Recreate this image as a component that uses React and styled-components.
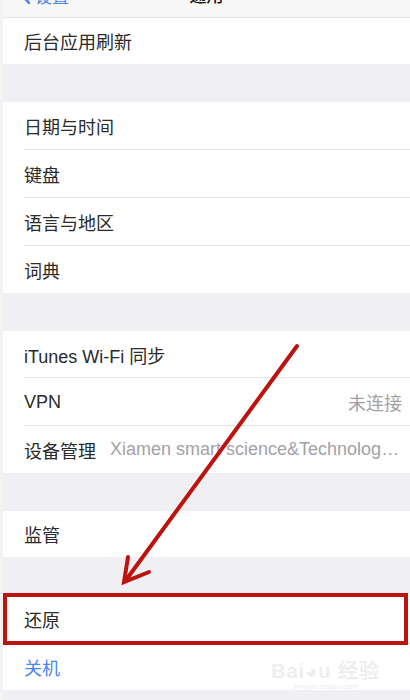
import React from "react";
import styled, { createGlobalStyle } from "styled-components";

const GlobalStyle = createGlobalStyle`
  html, body {
    margin: 0;
    padding: 0;
    background: #f3f3f1;
  }
  body {
    font-family: "Noto Sans", "Noto Sans CJK SC", sans-serif;
    -webkit-font-smoothing: antialiased;
  }
`;

const Page = styled.div`
  position: relative;
  width: 410px;
  height: 700px;
  overflow: hidden;
`;

const Screen = styled.div`
  margin-left: 3px;
  height: 700px;
  background: #efeff4;
`;

const NavBar = styled.div`
  height: 17px;
  background: #f7f7f7;
  border-bottom: 1px solid #e4e4e6;
  display: flex;
  align-items: flex-start;
  overflow: hidden;
  position: relative;
`;

const BackButton = styled.div`
  display: flex;
  align-items: center;
  gap: 4px;
  margin-left: 17px;
  margin-top: -14px;
  color: #4a86f0;
  font-size: 17px;
  line-height: 17px;
  font-family: "Noto Sans CJK SC", sans-serif;
`;

const NavTitle = styled.div`
  position: absolute;
  left: 0;
  right: 0;
  top: -14px;
  text-align: center;
  font-size: 17px;
  line-height: 17px;
  color: #111;
  font-weight: 500;
  font-family: "Noto Sans CJK SC", sans-serif;
`;

const Group = styled.div`
  background: #fff;
  margin-bottom: 38px;
`;

const Row = styled.div`
  position: relative;
  height: ${(p) => p.$h || 47}px;
  display: flex;
  align-items: center;
  padding: 0 8px 0 21px;
  box-sizing: border-box;
  &:not(:last-child)::before {
    content: "";
    position: absolute;
    left: 21px;
    right: 0;
    bottom: 0;
    border-bottom: 1px solid #e3e3e6;
  }
  ${(p) =>
    p.$highlight &&
    `
    &::after {
      content: "";
      position: absolute;
      left: 0;
      right: 2px;
      top: -1px;
      bottom: -1px;
      border: 4px solid #bd120d;
      pointer-events: none;
    }
  `}
`;

const Label = styled.span`
  font-size: 18px;
  color: ${(p) => (p.$blue ? "#4a86f0" : "#2a2a2a")};
  font-family: "Liberation Sans", "Noto Sans CJK SC", sans-serif;
  white-space: nowrap;
  flex-shrink: 0;
`;

const Detail = styled.span`
  margin-left: auto;
  font-size: 18px;
  color: #a2a2a6;
  font-family: "Liberation Sans", "Noto Sans CJK SC", sans-serif;
  white-space: nowrap;
  overflow: hidden;
  text-overflow: ellipsis;
  padding-left: ${(p) => (p.$wide ? 14 : 0)}px;
  min-width: 0;
`;

const Overlay = styled.svg`
  position: absolute;
  left: 0;
  top: 0;
  pointer-events: none;
`;

const Watermark = styled.div`
  position: absolute;
  right: 30px;
  bottom: 8px;
  display: flex;
  flex-direction: column;
  align-items: center;
  color: #eeeeee;
  font-family: "Liberation Sans", "Noto Sans CJK SC", sans-serif;
  pointer-events: none;
`;

const MarkMain = styled.div`
  font-size: 20px;
  font-weight: 700;
  letter-spacing: 1px;
  line-height: 22px;
`;

const MarkSub = styled.div`
  font-size: 8px;
  line-height: 10px;
`;

const groups = [
  [{ label: "后台应用刷新", h: 46 }],
  [
    { label: "日期与时间", h: 48 },
    { label: "键盘", h: 48 },
    { label: "语言与地区", h: 48 },
    { label: "词典", h: 47 },
  ],
  [
    { label: "iTunes Wi-Fi 同步", h: 47 },
    { label: "VPN", detail: "未连接", h: 48 },
    {
      label: "设备管理",
      detail: "Xiamen smart science&Technology Co.,Ltd",
      wide: true,
      h: 47,
    },
  ],
  [{ label: "监管", h: 46 }],
  [
    { label: "还原", h: 50, highlight: true },
    { label: "关机", blue: true, h: 46 },
  ],
];

export default function App() {
  return (
    <Page>
      <GlobalStyle />
      <Screen>
        <NavBar>
          <BackButton>
            <svg width="11" height="18" viewBox="0 0 11 18">
              <path
                d="M9 1 L2 9 L9 17"
                fill="none"
                stroke="#4a86f0"
                strokeWidth="2.6"
                strokeLinecap="round"
                strokeLinejoin="round"
              />
            </svg>
            设置
          </BackButton>
          <NavTitle>通用</NavTitle>
        </NavBar>
        {groups.map((g, i) => (
          <Group key={i} style={i === 4 ? { marginTop: -1 } : undefined}>
            {g.map((r) => (
              <Row key={r.label} $h={r.h} $highlight={r.highlight}>
                <Label $blue={r.blue}>{r.label}</Label>
                {r.detail && <Detail $wide={r.wide}>{r.detail}</Detail>}
              </Row>
            ))}
          </Group>
        ))}
      </Screen>
      <Watermark>
        <MarkMain>Bai◕u 经验</MarkMain>
        <MarkSub>jingyan.baidu.com</MarkSub>
      </Watermark>
      <Overlay width="410" height="700" viewBox="0 0 410 700">
        <g stroke="#bd120d" strokeWidth="4" strokeLinecap="round" fill="none">
          <line x1="297" y1="346" x2="126" y2="580" />
          <path d="M128 557 L124 582 L149 572" strokeLinejoin="miter" />
        </g>
      </Overlay>
    </Page>
  );
}
